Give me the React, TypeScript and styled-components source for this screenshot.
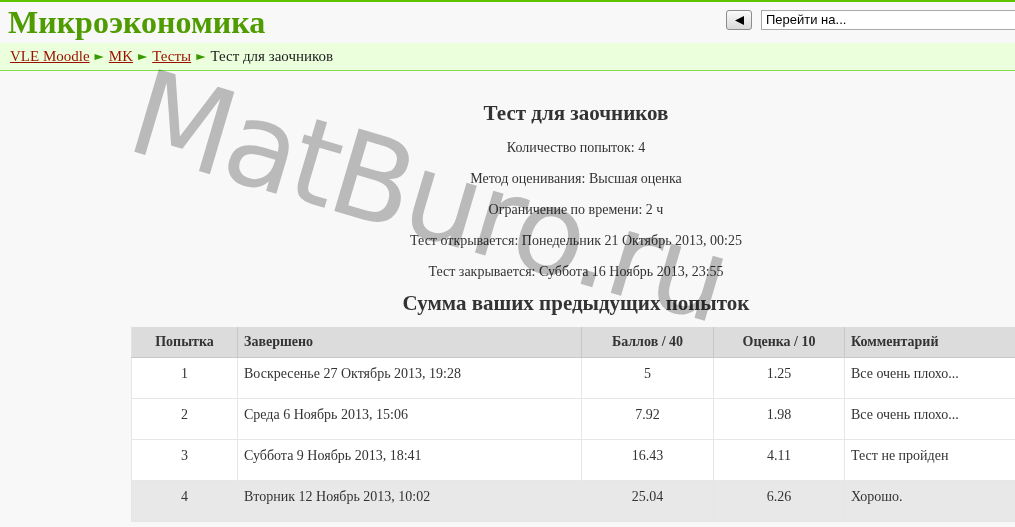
import React from 'react';
import styled, { createGlobalStyle } from 'styled-components';

const GlobalStyle = createGlobalStyle`
  html, body {
    margin: 0;
    padding: 0;
    background: #f8f8f8;
    overflow: hidden;
  }
  body {
    font-family: "Liberation Serif", "DejaVu Serif", serif;
    color: #333;
  }
`;

const attempts = [
  { n: 1, date: 'Воскресенье 27 Октябрь 2013, 19:28', score: '5', grade: '1.25', comment: 'Все очень плохо...' },
  { n: 2, date: 'Среда 6 Ноябрь 2013, 15:06', score: '7.92', grade: '1.98', comment: 'Все очень плохо...' },
  { n: 3, date: 'Суббота 9 Ноябрь 2013, 18:41', score: '16.43', grade: '4.11', comment: 'Тест не пройден' },
  { n: 4, date: 'Вторник 12 Ноябрь 2013, 10:02', score: '25.04', grade: '6.26', comment: 'Хорошо.', best: true },
];

const info = [
  'Количество попыток: 4',
  'Метод оценивания: Высшая оценка',
  'Ограничение по времени: 2 ч',
  'Тест открывается: Понедельник 21 Октябрь 2013, 00:25',
  'Тест закрывается: Суббота 16 Ноябрь 2013, 23:55',
];

const App = () => {
  return (
    <>
      <GlobalStyle />
      <Page>
        <Header>
          <Title>Микроэкономика</Title>
          <Nav>
            <BackButton>
              <svg width="9" height="9" viewBox="0 0 9 9">
                <polygon points="0,4.5 9,0 9,9" fill="#000" />
              </svg>
            </BackButton>
            <JumpBox>Перейти на...</JumpBox>
          </Nav>
        </Header>

        <Breadcrumb>
          <Crumb href="#">VLE Moodle</Crumb>
          <Arrow>►</Arrow>
          <Crumb href="#">MK</Crumb>
          <Arrow>►</Arrow>
          <Crumb href="#">Тесты</Crumb>
          <Arrow>►</Arrow>
          <span>Тест для заочников</span>
        </Breadcrumb>

        <Main>
          <Content>
            <Heading>Тест для заочников</Heading>
            {info.map((line) => (
              <InfoLine key={line}>{line}</InfoLine>
            ))}
            <SubHeading>Сумма ваших предыдущих попыток</SubHeading>

            <Table>
              <colgroup>
                <col style={{ width: 106 }} />
                <col style={{ width: 344 }} />
                <col style={{ width: 132 }} />
                <col style={{ width: 131 }} />
                <col />
              </colgroup>
              <thead>
                <tr>
                  <Th>Попытка</Th>
                  <Th $left>Завершено</Th>
                  <Th>Баллов / 40</Th>
                  <Th>Оценка / 10</Th>
                  <Th $left>Комментарий</Th>
                </tr>
              </thead>
              <tbody>
                {attempts.map((a) => (
                  <Row key={a.n} $best={a.best}>
                    <Td>{a.n}</Td>
                    <Td $left>{a.date}</Td>
                    <Td>{a.score}</Td>
                    <Td>{a.grade}</Td>
                    <Td $left>{a.comment}</Td>
                  </Row>
                ))}
              </tbody>
            </Table>
          </Content>
        </Main>

        <Watermark>MatBuro.ru</Watermark>
      </Page>
    </>
  );
};

const Page = styled.div`
  position: relative;
  width: 1015px;
  height: 527px;
  overflow: hidden;
  border-top: 2px solid #5fc400;
`;

const Header = styled.div`
  height: 41px;
  display: flex;
  justify-content: space-between;
  align-items: flex-start;
  padding-left: 8px;
`;

const Title = styled.h1`
  margin: 0;
  font-size: 32px;
  line-height: 41px;
  font-weight: 700;
  color: #4f9c00;
`;

const Nav = styled.div`
  display: flex;
  align-items: center;
  gap: 9px;
  padding-top: 8px;
  margin-right: -40px;
`;

const BackButton = styled.div`
  width: 24px;
  height: 18px;
  border: 1px solid #8c8c8c;
  border-radius: 3px;
  background: linear-gradient(#fafafa, #dadada);
  display: flex;
  align-items: center;
  justify-content: center;
`;

const JumpBox = styled.div`
  width: 288px;
  height: 18px;
  border: 1px solid #a8a8a8;
  background: #fff;
  padding-left: 4px;
  font-family: "Liberation Sans", Arial, sans-serif;
  font-size: 13px;
  line-height: 18px;
  color: #000;
`;

const Breadcrumb = styled.div`
  height: 27px;
  background: #ebffdc;
  border-bottom: 1px solid #80de48;
  padding-left: 10px;
  display: flex;
  align-items: center;
  gap: 5px;
  font-size: 15px;
  color: #222;
`;

const Crumb = styled.a`
  color: #9a1000;
  text-decoration: underline;
`;

const Arrow = styled.span`
  color: #3a9800;
  font-family: "DejaVu Sans", sans-serif;
  font-size: 12px;
  line-height: 15px;
`;

const Main = styled.div`
  padding: 30px 0 0 131px;
`;

const Content = styled.div`
  width: 890px;
  display: flex;
  flex-direction: column;
  align-items: center;
`;

const Heading = styled.h2`
  margin: 0 0 7px;
  font-size: 21px;
  line-height: 24px;
  font-weight: 700;
  color: #333;
`;

const InfoLine = styled.p`
  margin: 0;
  font-size: 14px;
  line-height: 31px;
  color: #333;
`;

const SubHeading = styled.h3`
  margin: 4px 0 12px;
  font-size: 21px;
  line-height: 24px;
  font-weight: 700;
  color: #333;
`;

const Table = styled.table`
  width: 890px;
  table-layout: fixed;
  border-collapse: collapse;
  font-size: 14px;
  color: #333;
`;

const Th = styled.th<{ $left?: boolean }>`
  height: 30px;
  padding: 0 6px;
  background: #dcdcdc;
  border-left: 1px solid #c8c8c8;
  border-bottom: 1px solid #c8c8c8;
  text-align: ${(p) => (p.$left ? 'left' : 'center')};
  vertical-align: middle;
  font-weight: 700;
  &:first-child {
    border-left: 1px solid #e2e2e2;
  }
`;

const Row = styled.tr<{ $best?: boolean }>`
  background: ${(p) => (p.$best ? '#e8e8e8' : '#fff')};
`;

const Td = styled.td<{ $left?: boolean }>`
  height: 41px;
  padding: 8px 6px 0;
  box-sizing: border-box;
  border: 1px solid #e6e6e6;
  border-top: none;
  text-align: ${(p) => (p.$left ? 'left' : 'center')};
  vertical-align: top;
  line-height: 16px;
`;

const Watermark = styled.div`
  position: absolute;
  left: 123px;
  top: 49px;
  font-family: "DejaVu Sans", sans-serif;
  font-size: 118px;
  line-height: 118px;
  letter-spacing: -4px;
  white-space: nowrap;
  color: #bfbfbf;
  mix-blend-mode: multiply;
  transform-origin: 9px 100px;
  transform: rotate(16.5deg);
  pointer-events: none;
`;

export default App;
